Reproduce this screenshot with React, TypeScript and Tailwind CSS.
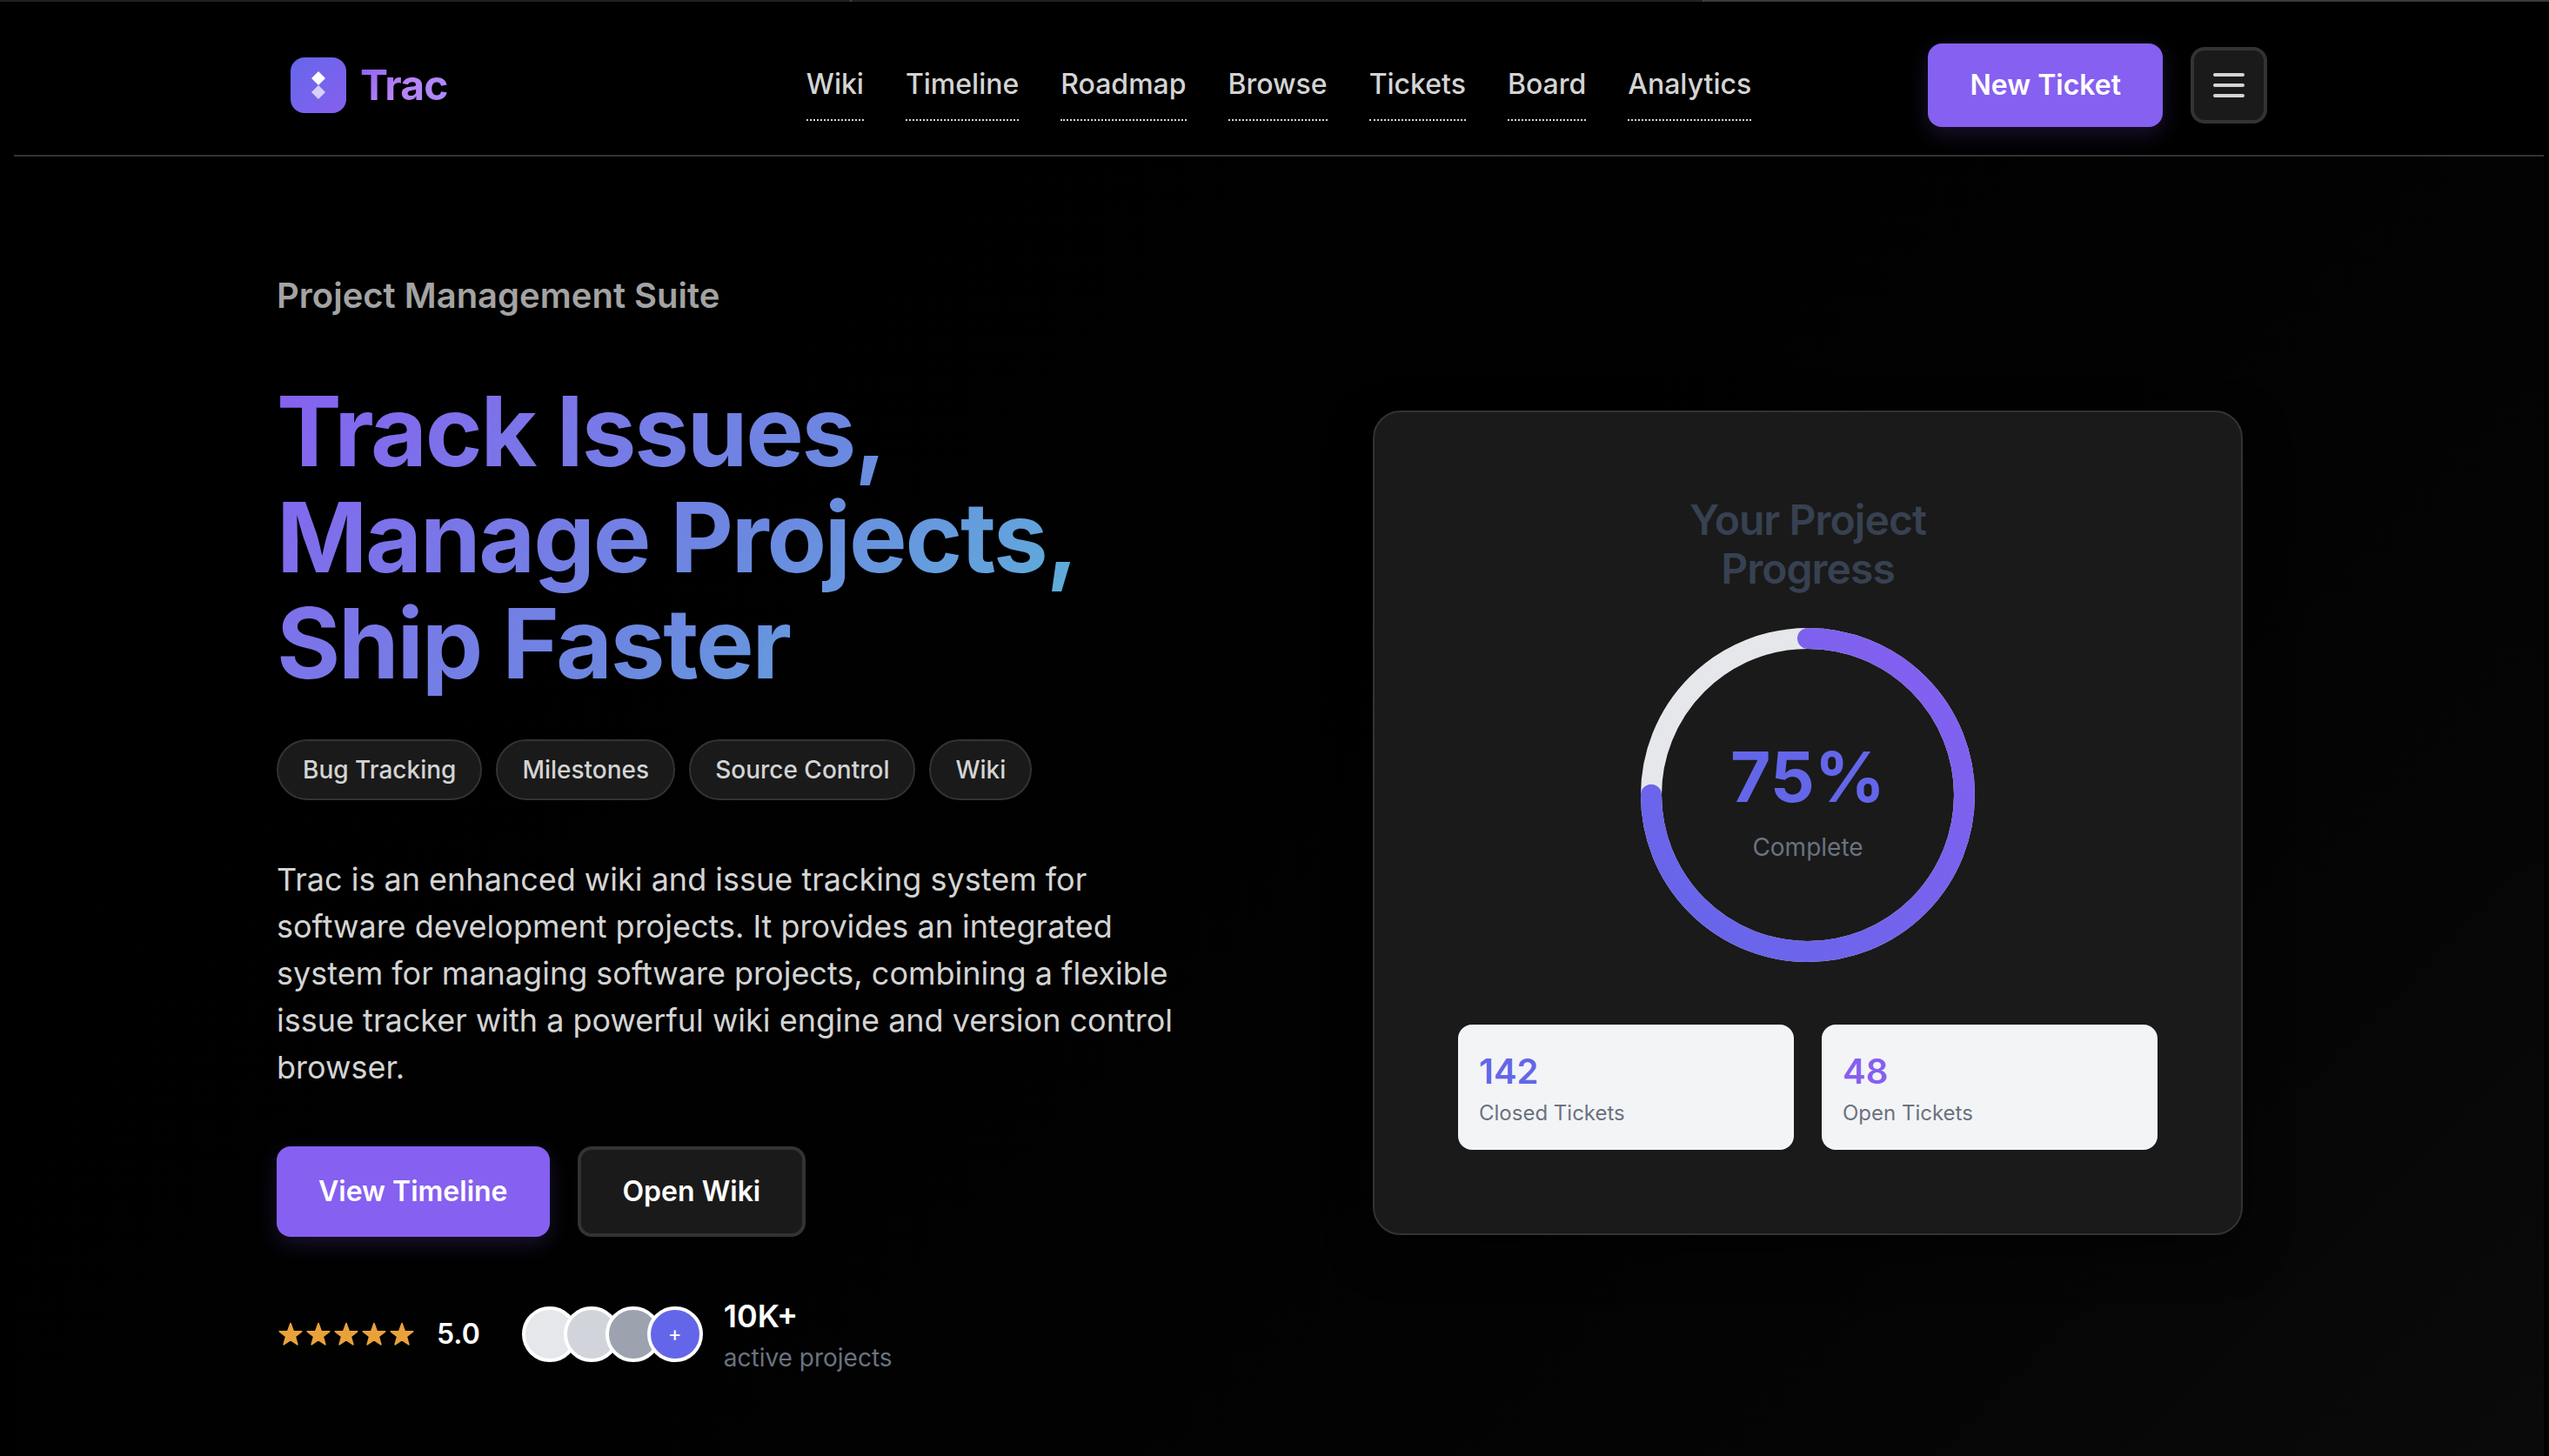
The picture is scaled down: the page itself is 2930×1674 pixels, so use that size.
import React from "react";

const NAV = ["Wiki", "Timeline", "Roadmap", "Browse", "Tickets", "Board", "Analytics"];
const FEATURES = ["Bug Tracking", "Milestones", "Source Control", "Wiki"];
const STATS = [
  { value: "142", label: "Closed Tickets", color: "text-[#6466e9]" },
  { value: "48", label: "Open Tickets", color: "text-[#8660f0]" },
];

function Logo() {
  return (
    <a href="#" className="flex items-center gap-4 justify-self-start">
      <span className="grid size-16 place-items-center rounded-2xl bg-linear-135 from-[#6466e9] to-[#8660f0]">
        <svg viewBox="0 0 32 32" className="size-8" aria-hidden="true">
          <path d="M16 0l8 8-8 8-8-8z" fill="#fff" />
          <path d="M16 16l8 8-8 8-8-8z" fill="#fff" fillOpacity="0.7" />
        </svg>
      </span>
      <span className="bg-linear-135 from-[#8660f0] via-[#b983f8] to-[#a78bfa] bg-clip-text text-5xl leading-[58px] font-bold tracking-[-0.02em] text-transparent">
        Trac
      </span>
    </a>
  );
}

function Header() {
  return (
    <header className="border-b-2 border-[#333] bg-black">
      <div className="mx-auto grid max-w-[2400px] grid-cols-[1fr_auto_1fr] items-center px-16 pt-12 pb-8">
        <Logo />
        <nav className="flex gap-12" aria-label="Main">
          {NAV.map((item) => (
            <a
              key={item}
              href="#"
              className="border-b-2 border-dotted border-[#d4d4d4] py-4 text-[32px] leading-[48px] font-medium text-[#d4d4d4]"
            >
              {item}
            </a>
          ))}
        </nav>
        <div className="flex items-center gap-8 justify-self-end">
          <button className="rounded-2xl bg-[#8660f0] px-12 py-6 text-[32px] leading-[48px] font-semibold text-white shadow-[0_8px_24px_rgba(134,96,240,0.2)]">
            New Ticket
          </button>
          <button
            aria-label="Menu"
            className="flex size-[88px] flex-col items-center justify-center gap-2 rounded-2xl border-4 border-[#333] bg-[#1a1a1a]"
          >
            <span className="h-1 w-9 rounded-sm bg-[#d4d4d4]" />
            <span className="h-1 w-9 rounded-sm bg-[#d4d4d4]" />
            <span className="h-1 w-9 rounded-sm bg-[#d4d4d4]" />
          </button>
        </div>
      </div>
    </header>
  );
}

function Star() {
  return (
    <svg viewBox="0 0 32 32" className="size-8" aria-hidden="true">
      <path
        d="M16 3.6L19.29 12.47L28.74 12.86L21.33 18.73L23.88 27.84L16 22.6L8.12 27.84L10.67 18.73L3.26 12.86L12.71 12.47Z"
        fill="#e9a23b"
        stroke="#e9a23b"
        strokeWidth="1.6"
        strokeLinejoin="round"
      />
    </svg>
  );
}

function SocialProof() {
  return (
    <div className="mt-16 flex items-center gap-12">
      <div className="flex items-center gap-6">
        <div className="flex" role="img" aria-label="Five stars">
          {[0, 1, 2, 3, 4].map((i) => (
            <Star key={i} />
          ))}
        </div>
        <span className="text-[32px] leading-[48px] font-semibold text-white">5.0</span>
      </div>
      <div className="flex items-center gap-6">
        <div className="flex -space-x-4">
          <span className="size-16 rounded-full border-4 border-white bg-[#e5e7eb]" />
          <span className="size-16 rounded-full border-4 border-white bg-[#d1d5db]" />
          <span className="size-16 rounded-full border-4 border-white bg-[#9ca3af]" />
          <span className="grid size-16 place-items-center rounded-full border-4 border-white bg-[#6466e9] text-2xl text-white">
            +
          </span>
        </div>
        <div>
          <div className="text-4xl leading-[54px] font-semibold text-white">10K+</div>
          <div className="text-[28px] leading-[42px] text-[#6b7280]">active projects</div>
        </div>
      </div>
    </div>
  );
}

function Intro() {
  return (
    <section>
      <p className="text-[40px] leading-[60px] font-semibold text-[#a3a3a3]">Project Management Suite</p>
      <h1 className="mt-16 bg-linear-135 from-[#8660f0] from-0% via-[#6b88e0] via-50% to-[#4fc4d4] to-100% bg-clip-text text-[112px] leading-[122px] font-bold tracking-[-0.02em] text-transparent">
        Track Issues,
        <br />
        Manage Projects,
        <br />
        Ship Faster
      </h1>
      <ul className="mt-[50px] flex flex-wrap gap-4">
        {FEATURES.map((feature) => (
          <li
            key={feature}
            className="rounded-full border-2 border-[#333] bg-[#1a1a1a] px-7 py-3 text-[28px] leading-[42px] font-medium text-[#d4d4d4]"
          >
            {feature}
          </li>
        ))}
      </ul>
      <p className="mt-16 text-4xl leading-[54px] text-[#d4d4d4]">
        Trac is an enhanced wiki and issue tracking system for software development projects. It provides an
        integrated system for managing software projects, combining a flexible issue tracker with a powerful
        wiki engine and version control browser.
      </p>
      <div className="mt-16 flex gap-8">
        <button className="rounded-2xl bg-[#8660f0] px-12 py-7 text-[32px] leading-[48px] font-semibold text-white shadow-[0_8px_24px_rgba(134,96,240,0.2)]">
          View Timeline
        </button>
        <button className="rounded-2xl border-4 border-[#333] bg-[#1a1a1a] px-12 py-6 text-[32px] leading-[48px] font-semibold text-white">
          Open Wiki
        </button>
      </div>
      <SocialProof />
    </section>
  );
}

function ProgressRing() {
  const length = 2 * Math.PI * 180;
  return (
    <div className="relative mx-auto mt-8 size-[400px]">
      <svg viewBox="0 0 400 400" className="size-full -rotate-90" aria-hidden="true">
        <defs>
          <linearGradient id="ring" x1="0" y1="0" x2="1" y2="1">
            <stop offset="0" stopColor="#6466e9" />
            <stop offset="1" stopColor="#8660f0" />
          </linearGradient>
        </defs>
        <circle cx="200" cy="200" r="180" fill="none" stroke="#e5e7eb" strokeWidth="24" />
        <circle
          cx="200"
          cy="200"
          r="180"
          fill="none"
          stroke="url(#ring)"
          strokeWidth="24"
          strokeLinecap="round"
          strokeDasharray={length}
          strokeDashoffset={length * 0.25}
        />
      </svg>
      <div className="absolute inset-0 flex flex-col items-center justify-center">
        <div className="text-[80px] leading-[120px] font-bold text-[#6466e9]">75%</div>
        <div className="text-[28px] leading-[42px] text-[#6b7280]">Complete</div>
      </div>
    </div>
  );
}

function ProgressCard() {
  return (
    <section className="mx-auto w-full max-w-[1000px] rounded-[32px] border-2 border-[#333] bg-[#1a1a1a] p-24 shadow-[0_20px_50px_rgba(0,0,0,0.5)]">
      <h2 className="text-center text-5xl leading-14 font-semibold tracking-[-0.02em] text-[#374151]">
        Your Project
        <br />
        Progress
      </h2>
      <ProgressRing />
      <div className="mt-16 grid grid-cols-2 gap-8">
        {STATS.map((stat) => (
          <div key={stat.label} className="rounded-2xl bg-[#f3f4f6] p-6">
            <div className={`text-[40px] leading-[60px] font-semibold ${stat.color}`}>{stat.value}</div>
            <div className="text-2xl leading-9 text-[#6b7280]">{stat.label}</div>
          </div>
        ))}
      </div>
    </section>
  );
}

export default function App() {
  return (
    <div className="flex min-h-screen flex-col bg-black font-[Inter,sans-serif]">
      <div
        className="grid h-0.5 shrink-0 grid-cols-[979fr_980fr_971fr] divide-x-2 divide-[#444]"
        aria-hidden="true"
      >
        <span className="bg-[#222]" />
        <span className="bg-[#222]" />
        <span className="bg-[#3a3a3a]" />
      </div>
      <div className="flex grow flex-col pr-1.5 pl-4">
        <Header />
        <main className="grow bg-linear-135 from-black to-[#0a0a0a]">
          <div className="mx-auto grid max-w-[2400px] grid-cols-2 items-center gap-32 px-12 pt-[130px] pb-16">
            <Intro />
            <ProgressCard />
          </div>
        </main>
      </div>
    </div>
  );
}
